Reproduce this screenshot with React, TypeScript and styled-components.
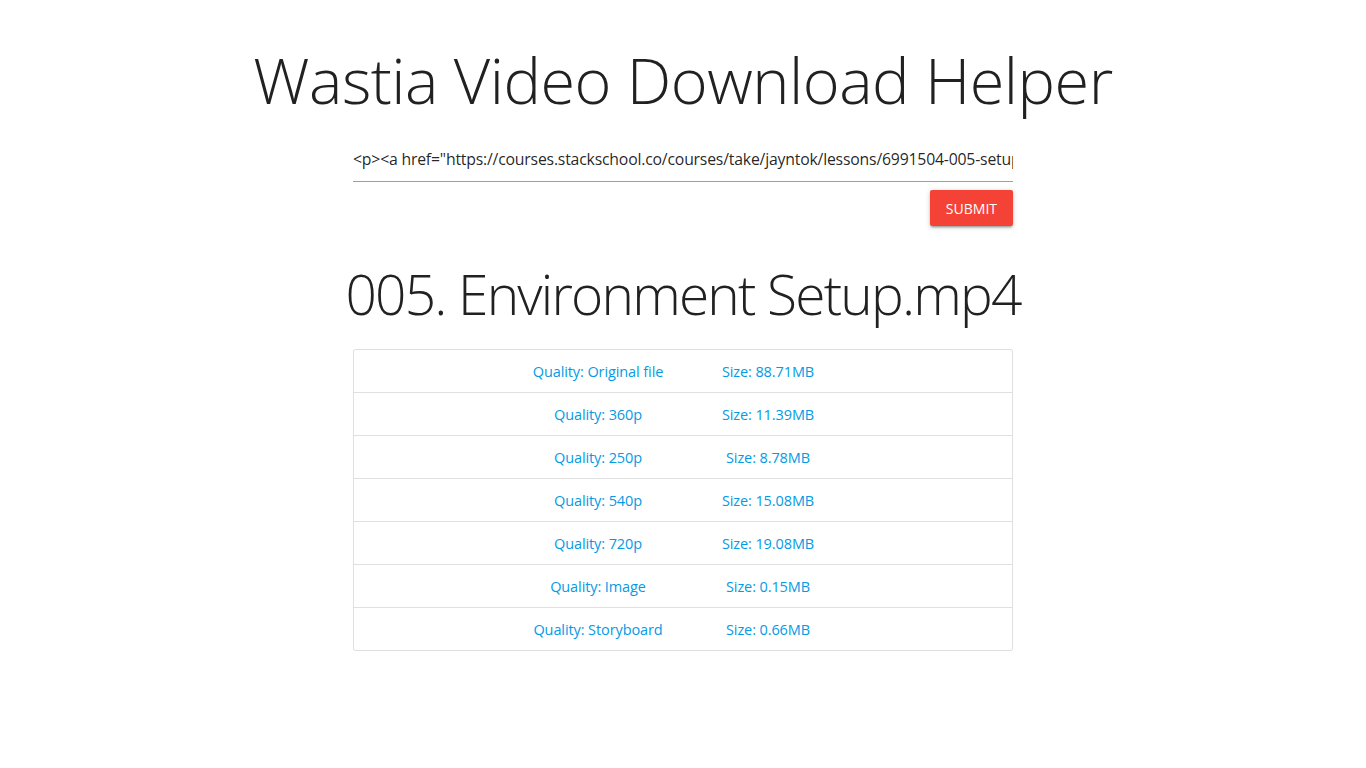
import React from "react";
import styled, { createGlobalStyle } from "styled-components";

const GlobalStyle = createGlobalStyle`
  html, body {
    margin: 0;
    padding: 0;
    background: #fff;
  }
  body {
    font-family: "Open Sans", "Noto Sans", sans-serif;
    color: rgba(0, 0, 0, 0.87);
  }
`;

const Page = styled.main`
  display: flex;
  flex-direction: column;
  align-items: center;
  width: 100%;
`;

const Column = styled.div`
  width: 660px;
`;

const Title = styled.h1`
  margin: 43px 0 0;
  font-size: 63px;
  line-height: 74px;
  font-weight: 300;
  letter-spacing: -0.5px;
  white-space: nowrap;
  text-align: center;
  color: #212121;
`;

const Form = styled.form`
  margin-top: 19px;
`;

const UrlInput = styled.input`
  display: block;
  box-sizing: border-box;
  width: 100%;
  height: 46px;
  padding: 0;
  border: none;
  border-bottom: 1px solid #9e9e9e;
  outline: none;
  background: transparent;
  font-family: inherit;
  font-size: 15.8px;
  letter-spacing: -0.2px;
  color: rgba(0, 0, 0, 0.87);
`;

const ButtonRow = styled.div`
  display: flex;
  justify-content: flex-end;
  margin-top: 8px;
`;

const SubmitButton = styled.button`
  height: 36px;
  padding: 0 16px;
  border: none;
  border-radius: 2px;
  background: #f44336;
  color: #fff;
  font-family: inherit;
  font-size: 14px;
  text-transform: uppercase;
  box-shadow: 0 2px 2px 0 rgba(0, 0, 0, 0.14), 0 3px 1px -2px rgba(0, 0, 0, 0.12),
    0 1px 5px 0 rgba(0, 0, 0, 0.2);
  cursor: pointer;
`;

const FileName = styled.h2`
  margin: 37px 0 0;
  font-size: 55px;
  line-height: 62px;
  font-weight: 300;
  letter-spacing: -1.8px;
  white-space: nowrap;
  text-align: center;
  color: #212121;
`;

const Collection = styled.ul`
  list-style: none;
  margin: 24px 0 0;
  padding: 0;
  border: 1px solid #e0e0e0;
  border-radius: 2px;
`;

const Item = styled.li<{ $last?: boolean }>`
  border-bottom: ${(p) => (p.$last ? "none" : "1px solid #e0e0e0")};
`;

const ItemLink = styled.a`
  display: grid;
  grid-template-columns: 170px 170px;
  justify-content: center;
  align-items: center;
  height: 42px;
  color: #039be5;
  font-size: 14.5px;
  letter-spacing: -0.1px;
  text-decoration: none;
  text-align: center;
`;

const files = [
  { quality: "Original file", size: "88.71MB" },
  { quality: "360p", size: "11.39MB" },
  { quality: "250p", size: "8.78MB" },
  { quality: "540p", size: "15.08MB" },
  { quality: "720p", size: "19.08MB" },
  { quality: "Image", size: "0.15MB" },
  { quality: "Storyboard", size: "0.66MB" },
];

const sourceText =
  '<p><a href="https://courses.stackschool.co/courses/take/jayntok/lessons/6991504-005-setup-environment">005. Environment Setup</a></p>';

export default function App() {
  return (
    <>
      <GlobalStyle />
      <Page>
        <Title>Wastia Video Download Helper</Title>
        <Column>
          <Form onSubmit={(e) => e.preventDefault()}>
            <UrlInput type="text" defaultValue={sourceText} />
            <ButtonRow>
              <SubmitButton type="submit">Submit</SubmitButton>
            </ButtonRow>
          </Form>
        </Column>
        <FileName>005. Environment Setup.mp4</FileName>
        <Column>
          <Collection>
            {files.map((f, i) => (
              <Item key={f.quality} $last={i === files.length - 1}>
                <ItemLink href="#">
                  <span>Quality: {f.quality}</span>
                  <span>Size: {f.size}</span>
                </ItemLink>
              </Item>
            ))}
          </Collection>
        </Column>
      </Page>
    </>
  );
}
